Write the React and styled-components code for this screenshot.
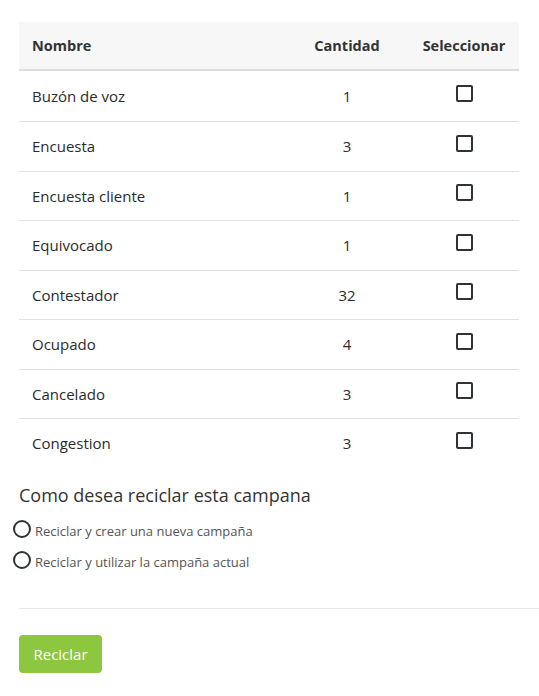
import React from 'react';
import styled, {createGlobalStyle} from 'styled-components';

const rows = [
    {name: 'Buzón de voz', qty: 1},
    {name: 'Encuesta', qty: 3},
    {name: 'Encuesta cliente', qty: 1},
    {name: 'Equivocado', qty: 1},
    {name: 'Contestador', qty: 32},
    {name: 'Ocupado', qty: 4},
    {name: 'Cancelado', qty: 3},
    {name: 'Congestion', qty: 3},
];

const options = [
    'Reciclar y crear una nueva campaña',
    'Reciclar y utilizar la campaña actual',
];

export default () => {
    return (
        <>
            <GlobalStyle/>
            <Page>
                <Table>
                    <HeadRow>
                        <Cell>Nombre</Cell>
                        <Cell center>Cantidad</Cell>
                        <Cell center>Seleccionar</Cell>
                    </HeadRow>
                    {rows.map((r, i) => (
                        <BodyRow key={r.name} first={i === 0}>
                            <Cell>{r.name}</Cell>
                            <Cell center>{r.qty}</Cell>
                            <Cell center><Checkbox/></Cell>
                        </BodyRow>
                    ))}
                </Table>

                <Title>Como desea reciclar esta campana</Title>
                <Options>
                    {options.map(o => (
                        <Option key={o}>
                            <Radio/>
                            <span>{o}</span>
                        </Option>
                    ))}
                </Options>

                <Divider/>
                <Button>Reciclar</Button>
            </Page>
        </>
    )
};

const GlobalStyle = createGlobalStyle`
  *, *::before, *::after{
    box-sizing: border-box;
  }
  body{
    margin: 0;
    background: #fff;
    font-family: "Open Sans", "Noto Sans", sans-serif;
    color: #333;
  }
`;

const Page = styled.div`
  padding: 22px 0 0 19px;
`;

const Table = styled.div`
  width: 500px;
`;

const Row = styled.div`
  display: grid;
  grid-template-columns: 1fr 124px 110px;
  align-items: center;
`;

const HeadRow = styled(Row)`
  height: 49px;
  background: #f7f7f7;
  border-bottom: 2px solid #dddddd;
  font-weight: 700;
  font-size: 14.5px;
  color: #333;
`;

const BodyRow = styled(Row)`
  height: ${p => p.first ? '50px' : '49.5px'};
  border-top: ${p => p.first ? 'none' : '1px solid #e2e2e2'};
  font-size: 15px;
  color: #2b2b2b;
`;

const Cell = styled.div`
  padding: 0 13px;
  display: flex;
  justify-content: ${p => p.center ? 'center' : 'flex-start'};
  white-space: nowrap;
`;

const Checkbox = styled.span`
  display: block;
  width: 17px;
  height: 17px;
  border: 2px solid #2f3337;
  border-radius: 2px;
  margin-top: -6px;
  margin-left: 1px;
`;

const Title = styled.h3`
  margin: 15px 0 0;
  font-size: 18px;
  font-weight: 400;
  color: #333;
  line-height: 24px;
`;

const Options = styled.div`
  margin-top: 13px;
  display: flex;
  flex-direction: column;
  gap: 11px;
`;

const Option = styled.label`
  display: flex;
  align-items: flex-end;
  margin-left: -6px;
  font-size: 13px;
  color: #555;
  line-height: 18px;
`;

const Radio = styled.span`
  display: block;
  flex: none;
  width: 18px;
  height: 18px;
  border: 2px solid #2f3337;
  border-radius: 50%;
  margin-right: 4px;
  margin-bottom: 2px;
`;

const Divider = styled.div`
  margin-top: 37px;
  border-top: 1px solid #e6e6e6;
`;

const Button = styled.button`
  display: block;
  margin-top: 26px;
  width: 83px;
  height: 38px;
  background: #8dc63f;
  border: none;
  border-radius: 4px;
  color: #fff;
  font-family: "Open Sans", "Noto Sans", sans-serif;
  font-size: 15px;
`;
